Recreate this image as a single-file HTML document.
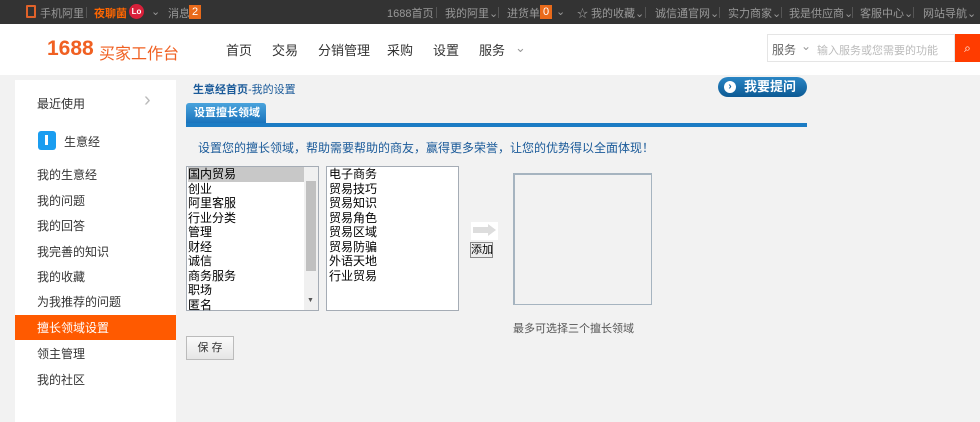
<!DOCTYPE html>
<html><head><meta charset="utf-8"><style>
*{margin:0;padding:0;box-sizing:border-box}
body{width:980px;height:422px;overflow:hidden;background:#f2f2f2;font-family:"Liberation Sans","Noto Sans CJK SC",sans-serif;font-size:12px;color:#333;position:relative}
.a{position:absolute;white-space:nowrap}
.top{position:absolute;left:0;top:0;width:980px;height:24px;background:#333;color:#999;font-size:11px}
.top .a{top:5px}
.sep{position:absolute;top:7px;width:1px;height:11px;background:#555}
.hdr{position:absolute;left:0;top:24px;width:980px;height:51px;background:#fff}
.nav{font-size:13px;color:#333;top:16px}
.side{position:absolute;left:15px;top:80px;width:161px;height:342px;background:#fff}
.side .a{left:22px;font-size:12px;color:#333}
.lb{position:absolute;border:1px solid #a5acb5;background:#fff;font-size:12px;line-height:14.5px;color:#000}
</style></head><body>
<div class="top">
<div class="a" style="left:26px;top:5px;width:10px;height:13px;border:2px solid #e0622a;border-radius:1px"></div>
<div class="a" style="left:40px">手机阿里</div>
<div class="sep" style="left:86px"></div>
<div class="a" style="left:94px;color:#f60;font-weight:bold">夜聊菌</div>
<div class="a" style="left:129px;top:4px;width:15px;height:15px;border-radius:50%;background:#d9203a;color:#fff;font-size:8px;line-height:15px;text-align:center;font-weight:bold">Lo</div>
<div class="a" style="left:151px">⌄</div>
<div class="a" style="left:168px">消息</div>
<div class="a" style="left:189px;top:5px;width:12px;height:14px;background:#e96a1a;color:#fff;text-align:center;line-height:14px">2</div>
<div class="a" style="left:387px">1688首页</div><div class="sep" style="left:436px"></div>
<div class="a" style="left:445px">我的阿里⌄</div><div class="sep" style="left:498px"></div>
<div class="a" style="left:507px">进货单</div>
<div class="a" style="left:540px;top:5px;width:12px;height:14px;background:#e96a1a;color:#fff;text-align:center;line-height:14px">0</div>
<div class="a" style="left:556px">⌄</div>
<div class="a" style="left:577px">☆ 我的收藏⌄</div><div class="sep" style="left:645px"></div>
<div class="a" style="left:655px">诚信通官网⌄</div><div class="sep" style="left:719px"></div>
<div class="a" style="left:728px">实力商家⌄</div><div class="sep" style="left:781px"></div>
<div class="a" style="left:789px">我是供应商⌄</div><div class="sep" style="left:852px"></div>
<div class="a" style="left:860px">客服中心⌄</div><div class="sep" style="left:913px"></div>
<div class="a" style="left:923px">网站导航⌄</div>
</div>
<div class="hdr">
<div class="a" style="left:47px;top:13px;font-size:21px;font-weight:bold;color:#f06022">1688</div>
<div class="a" style="left:99px;top:16px;font-size:16px;color:#f06022">买家工作台</div>
<div class="a nav" style="left:226px">首页</div>
<div class="a nav" style="left:272px">交易</div>
<div class="a nav" style="left:318px">分销管理</div>
<div class="a nav" style="left:387px">采购</div>
<div class="a nav" style="left:433px">设置</div>
<div class="a nav" style="left:479px">服务</div>
<div class="a nav" style="left:515px;color:#999">⌄</div>
<div class="a" style="left:767px;top:10px;width:188px;height:28px;border:1px solid #e5e5e5"></div>
<div class="a" style="left:772px;top:17px;color:#666">服务</div>
<div class="a" style="left:801px;top:15px;color:#999">⌄</div>
<div class="a" style="left:817px;top:18px;color:#bbb;font-size:11px">输入服务或您需要的功能</div>
<div class="a" style="left:955px;top:10px;width:25px;height:28px;background:#ff3c00;color:#fff;text-align:center;line-height:28px">⌕</div>
</div>
<div class="side">
<div class="a" style="top:15px">最近使用</div>
<div class="a" style="left:129px;top:9px;color:#bbb;font-size:20px">›</div>
<div class="a" style="left:23px;top:51px;width:18px;height:19px;background:#1a9df0;border-radius:3px"><div style="position:absolute;left:7px;top:4px;width:3px;height:10px;background:#fff"></div></div>
<div class="a" style="left:49px;top:53px">生意经</div>
<div class="a" style="top:86px">我的生意经</div>
<div class="a" style="top:112px">我的问题</div>
<div class="a" style="top:137px">我的回答</div>
<div class="a" style="top:163px">我完善的知识</div>
<div class="a" style="top:188px">我的收藏</div>
<div class="a" style="top:213px">为我推荐的问题</div>
<div class="a" style="left:0;top:235px;width:161px;height:25px;background:#ff5a00"></div>
<div class="a" style="top:239px;color:#fff">擅长领域设置</div>
<div class="a" style="top:265px">领主管理</div>
<div class="a" style="top:291px">我的社区</div>
</div>
<div class="a" style="left:193px;top:81px;font-size:11px;color:#1a5a99"><b>生意经首页</b>-我的设置</div>
<div class="a" style="left:718px;top:77px;width:89px;height:20px;border-radius:10px;background:linear-gradient(#2a85c4,#0d5a94);color:#fff;font-weight:bold;font-size:13px;line-height:20px;padding-left:26px">我要提问</div>
<div class="a" style="left:724px;top:81px;width:12px;height:12px;border-radius:50%;background:#fff;color:#1466a4;font-size:10px;line-height:12px;text-align:center;font-weight:bold">›</div>
<div class="a" style="left:186px;top:103px;width:80px;height:20px;background:linear-gradient(#4aa3dc,#1a74bd);border-radius:3px 3px 0 0;color:#fff;font-size:11px;font-weight:bold;line-height:20px;padding-left:8px">设置擅长领域</div>
<div class="a" style="left:186px;top:123px;width:621px;height:4px;background:#1c7cc4"></div>
<div class="a" style="left:198px;top:139px;font-size:12px;color:#1a5a99">设置您的擅长领域，帮助需要帮助的商友，赢得更多荣誉，让您的优势得以全面体现！</div>
<div class="lb" style="left:186px;top:166px;width:133px;height:145px;padding:0 0 0 1px">
<div style="background:#c8c8c8;width:116px">国内贸易</div><div>创业</div><div>阿里客服</div><div>行业分类</div><div>管理</div><div>财经</div><div>诚信</div><div>商务服务</div><div>职场</div><div>匿名</div>
<div style="position:absolute;right:0;top:0;width:14px;height:143px;background:#f0f0f0"><div style="position:absolute;left:2px;top:14px;width:10px;height:90px;background:#c0c0c0"></div><div style="position:absolute;left:3px;bottom:2px;font-size:7px;color:#555">▼</div></div>
</div>
<div class="lb" style="left:326px;top:166px;width:133px;height:145px;padding:0 0 0 2px">
<div>电子商务</div><div>贸易技巧</div><div>贸易知识</div><div>贸易角色</div><div>贸易区域</div><div>贸易防骗</div><div>外语天地</div><div>行业贸易</div>
<div style="position:absolute;right:0;top:0;width:14px;height:143px;background:#fff"></div>
</div>
<div class="a" style="left:471px;top:222px;width:27px;height:18px;background:#fff"><div style="position:absolute;left:2px;top:5px;width:16px;height:6px;background:#ddd"></div><div style="position:absolute;left:17px;top:2px;border-left:8px solid #ddd;border-top:6px solid transparent;border-bottom:6px solid transparent"></div></div>
<div class="a" style="left:470px;top:242px;width:23px;height:16px;border:1px solid #888;background:#eee;font-size:11px;line-height:14px;text-align:center;color:#000">添加</div>
<div class="a" style="left:513px;top:173px;width:139px;height:132px;border:2px solid #a6b4c0;border-right-width:1px;border-bottom-width:1px;background:#f2f2f2"></div>
<div class="a" style="left:513px;top:320px;font-size:11px;color:#555">最多可选择三个擅长领域</div>
<div class="a" style="left:186px;top:336px;width:48px;height:24px;border:1px solid #bbb;background:linear-gradient(#fafafa,#e6e6e6);font-size:11px;line-height:22px;text-align:center;color:#333">保 存</div>
</body></html>
